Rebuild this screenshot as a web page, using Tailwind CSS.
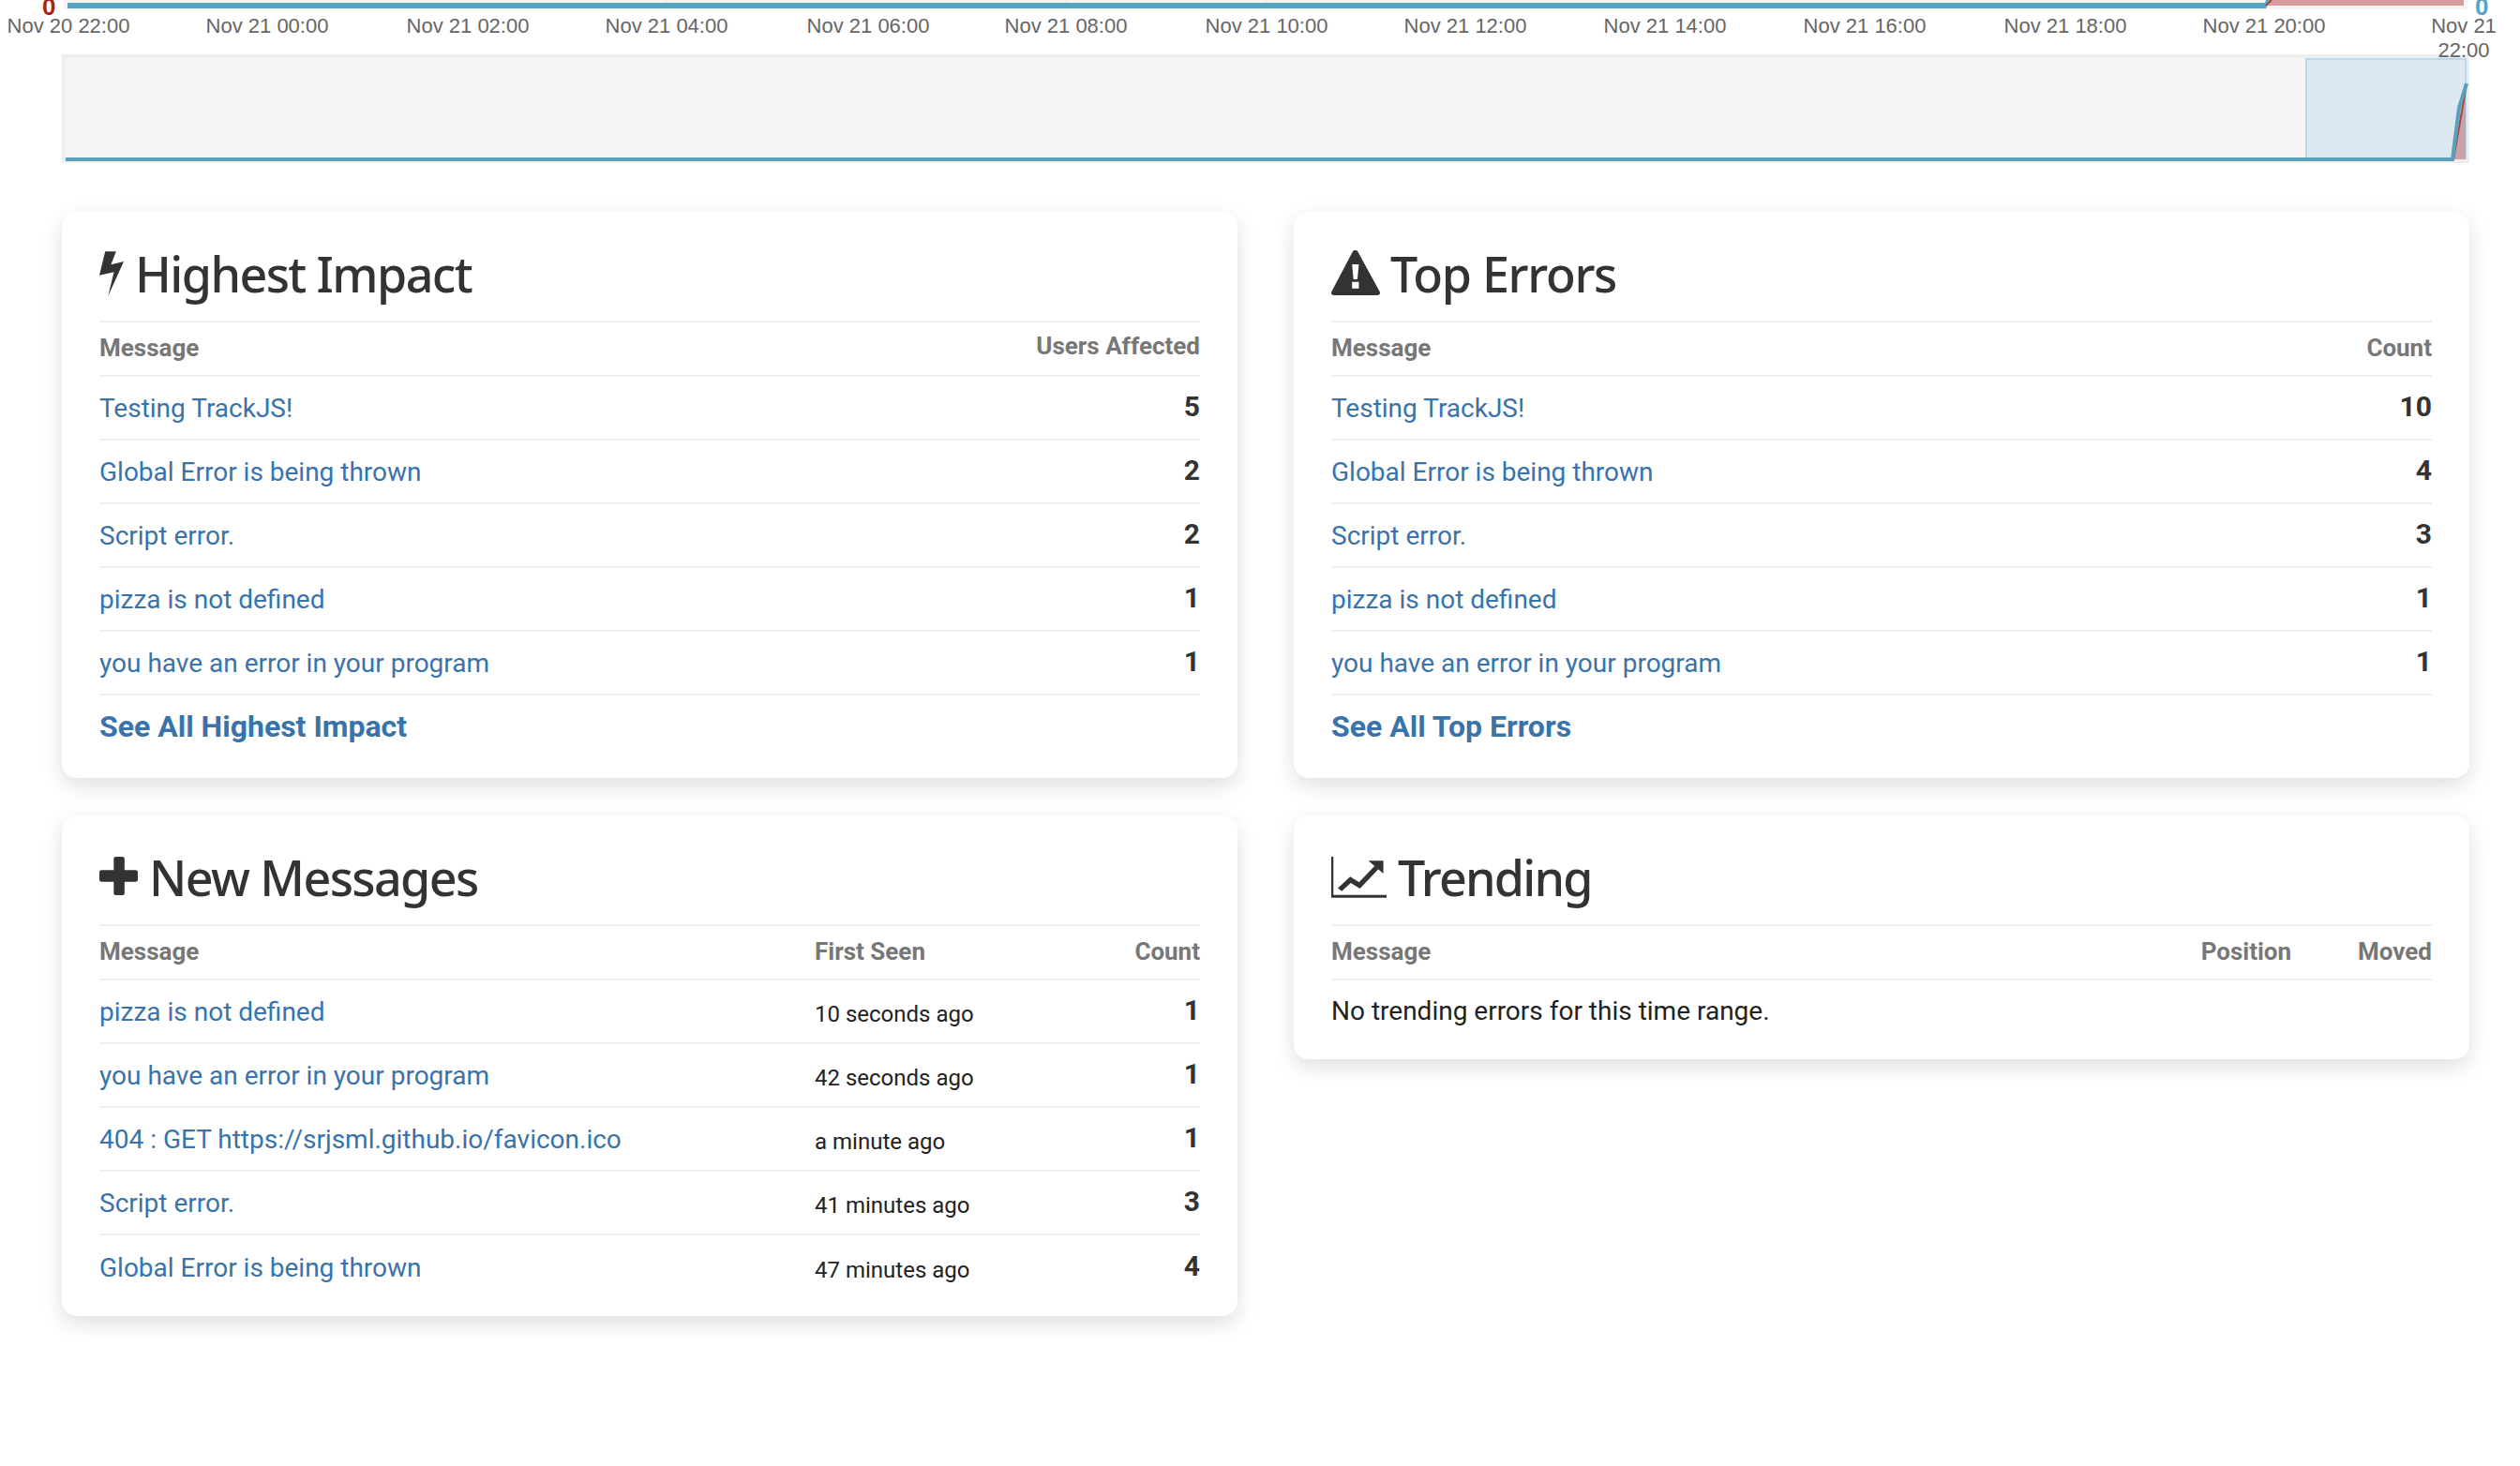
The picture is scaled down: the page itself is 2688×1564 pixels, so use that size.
<!DOCTYPE html>
<html lang="en">
<head>
    <meta charset="UTF-8">
    <title>TrackJS Dashboard</title>
    <script src="https://cdn.jsdelivr.net/npm/@tailwindcss/browser@4"></script>
</head>
<body class="bg-white font-['Roboto',sans-serif] text-[#222] overflow-hidden h-[1564px]">

<!-- Chart (free canvas) -->
<div class="relative h-[226px] font-['Liberation_Sans',sans-serif] text-[22px] leading-[26px] text-[#666] overflow-hidden">
    <svg class="absolute left-0 top-0" width="2688" height="180" viewBox="0 0 2688 180">
        <rect x="68" y="0" width="2564" height="10" fill="#f5f5f5"/>
        <path d="M285 0V3 M499 0V3 M711 0V3 M926 0V3 M1137 0V3 M1351 0V3 M1563 0V3 M1776 0V3 M1989 0V3 M2203 0V3" stroke="#e6e6e6" stroke-width="1"/>
        <rect x="72" y="3" width="2345" height="6" fill="#58a3bf"/>
        <path d="M2420 0 H2628 V6 H2417 Z" fill="#d99c9c"/>
        <path d="M2414 9 H2417 L2421 0 H2417 Z" fill="#58a3bf"/>
        <path d="M2417 6 L2423 0" stroke="#a8443f" stroke-width="2"/>
        <!-- Navigator -->
        <rect x="66" y="58" width="2568" height="116" fill="#eeeeee"/>
        <rect x="70" y="62" width="2560" height="108" fill="#f5f5f5"/>
        <rect x="2460" y="63" width="170" height="106" fill="#dde9f0" stroke="#b5d9ee" stroke-width="2"/>
        <path d="M2617 170 L2628 100 L2630 95 V170 Z" fill="#c9a3a8"/>
        <path d="M2617 170 L2631 90" stroke="#a8443f" stroke-width="2" fill="none"/>
        <path d="M70 170 H2616 L2623 115 L2631 89" stroke="#58a0bc" stroke-width="4" fill="none"/>
    </svg>

    <span class="absolute left-[45px] top-[-6px] text-[26px] font-bold text-[#a8231a]">0</span>
    <span class="absolute left-[2640px] top-[-6px] text-[26px] font-bold text-[#58a3bf]">0</span>

    <span class="absolute left-[73px] top-[15px] -translate-x-1/2 whitespace-nowrap">Nov 20 22:00</span>
    <span class="absolute left-[285px] top-[15px] -translate-x-1/2 whitespace-nowrap">Nov 21 00:00</span>
    <span class="absolute left-[499px] top-[15px] -translate-x-1/2 whitespace-nowrap">Nov 21 02:00</span>
    <span class="absolute left-[711px] top-[15px] -translate-x-1/2 whitespace-nowrap">Nov 21 04:00</span>
    <span class="absolute left-[926px] top-[15px] -translate-x-1/2 whitespace-nowrap">Nov 21 06:00</span>
    <span class="absolute left-[1137px] top-[15px] -translate-x-1/2 whitespace-nowrap">Nov 21 08:00</span>
    <span class="absolute left-[1351px] top-[15px] -translate-x-1/2 whitespace-nowrap">Nov 21 10:00</span>
    <span class="absolute left-[1563px] top-[15px] -translate-x-1/2 whitespace-nowrap">Nov 21 12:00</span>
    <span class="absolute left-[1776px] top-[15px] -translate-x-1/2 whitespace-nowrap">Nov 21 14:00</span>
    <span class="absolute left-[1989px] top-[15px] -translate-x-1/2 whitespace-nowrap">Nov 21 16:00</span>
    <span class="absolute left-[2203px] top-[15px] -translate-x-1/2 whitespace-nowrap">Nov 21 18:00</span>
    <span class="absolute left-[2415px] top-[15px] -translate-x-1/2 whitespace-nowrap">Nov 21 20:00</span>
    <span class="absolute left-[2628px] top-[15px] -translate-x-1/2 text-center w-[70px] h-[47px] overflow-hidden">Nov 21 22:00</span>
</div>

<!-- Cards -->
<div class="flex items-start gap-[60px] pl-[66px] pr-[54px]">
    <div class="w-[1254px] flex flex-col gap-[40px]">

        <section class="bg-white rounded-2xl shadow-[0_8px_22px_rgba(0,0,0,0.13)] px-10 h-[604px]">
            <h2 class="flex items-center h-[116px] pt-[16px] font-['Noto_Sans',sans-serif] text-[52px] font-medium text-[#333] tracking-[-1.6px]">
                <svg class="w-[26px] h-[48px] mr-[12px]" viewBox="147 183 67 145" preserveAspectRatio="none" fill="#333"><path d="M163 184 H193 L179 226 L214 216 L171 327 L187 250 L147 261 Z"/></svg>
                Highest Impact
            </h2>
            <div class="flex items-center justify-between h-[60px] pb-[2px] border-t-2 border-b-2 border-[#eee] text-[26px] font-bold text-[#777]"><span>Message</span><span class="-mt-[4px]">Users Affected</span></div>
            <a class="flex items-center justify-between h-[68px] border-b-2 border-[#eee]"><span class="text-[28px] text-[#3a72aa] mt-[2px]">Testing TrackJS!</span><span class="text-[30px] font-bold text-[#333] -mt-[3px]">5</span></a>
            <a class="flex items-center justify-between h-[68px] border-b-2 border-[#eee]"><span class="text-[28px] text-[#3a72aa] mt-[2px]">Global Error is being thrown</span><span class="text-[30px] font-bold text-[#333] -mt-[3px]">2</span></a>
            <a class="flex items-center justify-between h-[68px] border-b-2 border-[#eee]"><span class="text-[28px] text-[#3a72aa] mt-[2px]">Script error.</span><span class="text-[30px] font-bold text-[#333] -mt-[3px]">2</span></a>
            <a class="flex items-center justify-between h-[68px] border-b-2 border-[#eee]"><span class="text-[28px] text-[#3a72aa] mt-[2px]">pizza is not defined</span><span class="text-[30px] font-bold text-[#333] -mt-[3px]">1</span></a>
            <a class="flex items-center justify-between h-[68px] border-b-2 border-[#eee]"><span class="text-[28px] text-[#3a72aa] mt-[2px]">you have an error in your program</span><span class="text-[30px] font-bold text-[#333] -mt-[3px]">1</span></a>
            <div class="flex items-center h-[66px] text-[32px] font-bold text-[#3a72aa]">See All Highest Impact</div>
        </section>

        <section class="bg-white rounded-2xl shadow-[0_8px_22px_rgba(0,0,0,0.13)] px-10 h-[534px]">
            <h2 class="flex items-center h-[116px] pt-[16px] font-['Noto_Sans',sans-serif] text-[52px] font-medium text-[#333] tracking-[-1.6px]">
                <svg class="w-[41px] h-[41px] mr-[12px] -mt-[3px]" viewBox="146 165 107 123" preserveAspectRatio="none" fill="#333"><rect x="186" y="165" width="30" height="123" rx="7"/><rect x="146" y="208" width="107" height="37" rx="7"/></svg>
                New Messages
            </h2>
            <div class="flex items-center h-[60px] pb-[1px] border-t-2 border-b-2 border-[#eee] text-[26px] font-bold text-[#777]"><span class="w-[763px]">Message</span><span>First Seen</span><span class="ml-auto">Count</span></div>
            <a class="flex items-center h-[68px] border-b-2 border-[#eee]"><span class="w-[763px] text-[28px] text-[#3a72aa] mt-[2px]">pizza is not defined</span><span class="text-[24px] mt-[5px]">10 seconds ago</span><span class="ml-auto text-[30px] font-bold text-[#333] -mt-[3px]">1</span></a>
            <a class="flex items-center h-[68px] border-b-2 border-[#eee]"><span class="w-[763px] text-[28px] text-[#3a72aa] mt-[2px]">you have an error in your program</span><span class="text-[24px] mt-[5px]">42 seconds ago</span><span class="ml-auto text-[30px] font-bold text-[#333] -mt-[3px]">1</span></a>
            <a class="flex items-center h-[68px] border-b-2 border-[#eee]"><span class="w-[763px] text-[28px] text-[#3a72aa] mt-[2px]">404 : GET https://srjsml.github.io/favicon.ico</span><span class="text-[24px] mt-[5px]">a minute ago</span><span class="ml-auto text-[30px] font-bold text-[#333] -mt-[3px]">1</span></a>
            <a class="flex items-center h-[68px] border-b-2 border-[#eee]"><span class="w-[763px] text-[28px] text-[#3a72aa] mt-[2px]">Script error.</span><span class="text-[24px] mt-[5px]">41 minutes ago</span><span class="ml-auto text-[30px] font-bold text-[#333] -mt-[3px]">3</span></a>
            <a class="flex items-center h-[68px]"><span class="w-[763px] text-[28px] text-[#3a72aa] mt-[2px]">Global Error is being thrown</span><span class="text-[24px] mt-[5px]">47 minutes ago</span><span class="ml-auto text-[30px] font-bold text-[#333] -mt-[3px]">4</span></a>
        </section>
    </div>

    <div class="w-[1254px] flex flex-col gap-[40px]">

        <section class="bg-white rounded-2xl shadow-[0_8px_22px_rgba(0,0,0,0.13)] px-10 h-[604px]">
            <h2 class="flex items-center h-[116px] pt-[16px] font-['Noto_Sans',sans-serif] text-[52px] font-medium text-[#333] tracking-[-1.3px]">
                <svg class="w-[52px] h-[48px] mr-[11px] -mt-[3px]" viewBox="131 172 136 145" preserveAspectRatio="none" fill="#333"><path d="M198 180 L259 309 H139 Z" stroke="#333" stroke-width="16" stroke-linejoin="round"/><path d="M189 217 H208 L204 266 H193 Z M189 274 H208 V295 H189 Z" fill="#fff"/></svg>
                Top Errors
            </h2>
            <div class="flex items-center justify-between h-[60px] pb-[2px] border-t-2 border-b-2 border-[#eee] text-[26px] font-bold text-[#777]"><span>Message</span><span>Count</span></div>
            <a class="flex items-center justify-between h-[68px] border-b-2 border-[#eee]"><span class="text-[28px] text-[#3a72aa] mt-[2px]">Testing TrackJS!</span><span class="text-[30px] font-bold text-[#333] -mt-[3px]">10</span></a>
            <a class="flex items-center justify-between h-[68px] border-b-2 border-[#eee]"><span class="text-[28px] text-[#3a72aa] mt-[2px]">Global Error is being thrown</span><span class="text-[30px] font-bold text-[#333] -mt-[3px]">4</span></a>
            <a class="flex items-center justify-between h-[68px] border-b-2 border-[#eee]"><span class="text-[28px] text-[#3a72aa] mt-[2px]">Script error.</span><span class="text-[30px] font-bold text-[#333] -mt-[3px]">3</span></a>
            <a class="flex items-center justify-between h-[68px] border-b-2 border-[#eee]"><span class="text-[28px] text-[#3a72aa] mt-[2px]">pizza is not defined</span><span class="text-[30px] font-bold text-[#333] -mt-[3px]">1</span></a>
            <a class="flex items-center justify-between h-[68px] border-b-2 border-[#eee]"><span class="text-[28px] text-[#3a72aa] mt-[2px]">you have an error in your program</span><span class="text-[30px] font-bold text-[#333] -mt-[3px]">1</span></a>
            <div class="flex items-center h-[66px] text-[32px] font-bold text-[#3a72aa]">See All Top Errors</div>
        </section>

        <section class="bg-white rounded-2xl shadow-[0_8px_22px_rgba(0,0,0,0.13)] px-10 h-[260px]">
            <h2 class="flex items-center h-[116px] pt-[16px] font-['Noto_Sans',sans-serif] text-[52px] font-medium text-[#333] tracking-[-1.8px]">
                <svg class="w-[59px] h-[44px] mr-[12px]" viewBox="131 165 155 134" preserveAspectRatio="none" fill="#333"><path d="M131 165 H137 V289 H286 V298 H131 Z"/><path d="M155 272 L185 240 L210 258 L258 200" stroke="#333" stroke-width="15" fill="none"/><path d="M235 178 H277 V220 Z"/></svg>
                Trending
            </h2>
            <div class="flex items-center h-[60px] pb-[1px] border-t-2 border-b-2 border-[#eee] text-[26px] font-bold text-[#777]"><span>Message</span><span class="ml-auto">Position</span><span class="ml-[71px]">Moved</span></div>
            <p class="flex items-center h-[66px] text-[28px]">No trending errors for this time range.</p>
        </section>
    </div>
</div>

</body>
</html>
